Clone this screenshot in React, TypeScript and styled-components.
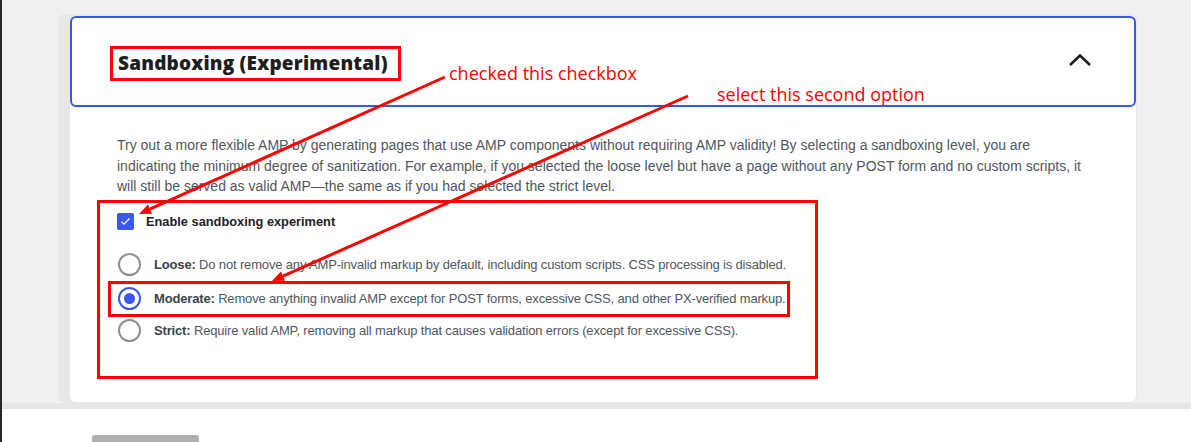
import React from "react";
import styled, { createGlobalStyle } from "styled-components";

const GlobalStyle = createGlobalStyle`
  html, body { margin: 0; padding: 0; background: #ffffff; }
  body { font-family: "Liberation Sans", Arial, sans-serif; }
  * { box-sizing: border-box; }
`;

const Page = styled.div`
  position: relative;
  display: flex;
  width: 1191px;
  height: 442px;
  overflow: hidden;
`;

const DarkEdge = styled.div`
  width: 2px;
  flex: none;
  background: #23282d;
`;

const Main = styled.div`
  flex: 1;
  display: flex;
  flex-direction: column;
`;

const TopSection = styled.div`
  background: #f0f0f0;
  padding: 14px 54px 0 56px;
  border-bottom: 6px solid #e7e7e7;
`;

const Wrapper = styled.div`
  background: #e7e7e7;
  border-radius: 8px;
  padding: 2px 1px 1px 12px;
`;

const Card = styled.section`
  background: #ffffff;
  border-radius: 6px;
`;

const Header = styled.div`
  height: 91px;
  border: 2px solid #3858e9;
  border-radius: 6px;
  display: flex;
  align-items: center;
  justify-content: space-between;
  padding: 4px 42px 0 38px;
`;

const Highlight = styled.div`
  border: 3px solid #ff0000;
`;

const Title = styled.h2`
  margin: 0;
  padding: 2px 10px 3px 5px;
  font-family: "Open Sans", "Noto Sans", sans-serif;
  font-weight: 800;
  font-size: 19px;
  line-height: 24px;
  color: #1e1e1e;
  letter-spacing: 0.2px;
`;

const Chevron = styled.svg`
  width: 24px;
  height: 14px;
  margin-top: -8px;
  display: block;
`;

const Body = styled.div`
  padding: 28px 40px 23px 47px;
`;

const Description = styled.p`
  margin: 0;
  font-size: 14px;
  line-height: 20.5px;
  color: #50575e;
  white-space: nowrap;
`;

const OptionsBox = styled.div`
  margin: 3px 0 0 -20px;
  width: 721px;
  height: 179px;
  border: 3px solid #ff0000;
  padding: 10px 0 0 17px;
`;

const CheckRow = styled.label`
  display: flex;
  align-items: center;
  gap: 12px;
  height: 18px;
  font-size: 12.8px;
  font-weight: 700;
  color: #1d2327;
`;

const CheckBox = styled.span`
  width: 17px;
  height: 17px;
  border-radius: 2px;
  background: #3858e9;
  display: flex;
  align-items: center;
  justify-content: center;
`;

const RadioList = styled.div`
  margin: 17px 0 0 -17px;
  display: flex;
  flex-direction: column;
`;

const RadioRow = styled.label<{ $marked?: boolean; $h: number }>`
  display: flex;
  align-items: center;
  gap: 13px;
  height: ${(p) => p.$h}px;
  margin-left: 8px;
  width: 682px;
  padding-left: ${(p) => (p.$marked ? 7 : 10)}px;
  border: ${(p) => (p.$marked ? "3px solid #ff0000" : "none")};
  font-size: 13px;
  letter-spacing: -0.16px;
  color: #50575e;
  white-space: nowrap;
`;

const Radio = styled.span<{ $on?: boolean }>`
  width: 23px;
  height: 23px;
  flex: none;
  border-radius: 50%;
  border: 2px solid ${(p) => (p.$on ? "#3858e9" : "#8c8f94")};
  display: flex;
  align-items: center;
  justify-content: center;
  &::after {
    content: "";
    display: ${(p) => (p.$on ? "block" : "none")};
    width: 11px;
    height: 11px;
    border-radius: 50%;
    background: #3858e9;
  }
`;

const Strong = styled.b`
  font-weight: 700;
  color: #3c434a;
`;

const Footer = styled.div`
  flex: 1;
  background: #ffffff;
  padding: 26px 0 0 90px;
`;

const GrayButton = styled.div`
  width: 107px;
  height: 30px;
  border-radius: 3px;
  background: #b0b0b0;
`;

const Overlay = styled.svg`
  position: absolute;
  left: 0;
  top: 0;
  pointer-events: none;
`;

const Note = styled.span<{ $x: number; $y: number }>`
  position: absolute;
  left: ${(p) => p.$x}px;
  top: ${(p) => p.$y}px;
  font-family: "Open Sans", "Noto Sans", sans-serif;
  font-size: 18px;
  line-height: 22px;
  color: #ff0000;
  white-space: nowrap;
  pointer-events: none;
`;

export default function App() {
  return (
    <>
      <GlobalStyle />
      <Page>
        <DarkEdge />
        <Main>
          <TopSection>
            <Wrapper>
              <Card>
                <Header>
                  <Highlight>
                    <Title>Sandboxing (Experimental)</Title>
                  </Highlight>
                  <Chevron viewBox="0 0 24 14">
                    <polyline
                      points="2,12 12,2.5 22,12"
                      fill="none"
                      stroke="#1e1e1e"
                      strokeWidth="2.6"
                    />
                  </Chevron>
                </Header>
                <Body>
                  <Description>
                    Try out a more flexible AMP by generating pages that use AMP components without requiring AMP validity! By selecting a sandboxing level, you are
                    <br />
                    indicating the minimum degree of sanitization. For example, if you selected the loose level but have a page without any POST form and no custom scripts, it
                    <br />
                    will still be served as valid AMP—the same as if you had selected the strict level.
                  </Description>
                  <OptionsBox>
                    <CheckRow>
                      <CheckBox>
                        <svg width="11" height="9" viewBox="0 0 11 9">
                          <polyline
                            points="1.5,4.8 4,7.2 9.5,1.5"
                            fill="none"
                            stroke="#ffffff"
                            strokeWidth="1.3"
                          />
                        </svg>
                      </CheckBox>
                      Enable sandboxing experiment
                    </CheckRow>
                    <RadioList>
                      <RadioRow $h={33}>
                        <Radio />
                        <span>
                          <Strong>Loose:</Strong> Do not remove any AMP-invalid markup by default, including custom scripts. CSS processing is disabled.
                        </span>
                      </RadioRow>
                      <RadioRow $h={36} $marked>
                        <Radio $on />
                        <span>
                          <Strong>Moderate:</Strong> Remove anything invalid AMP except for POST forms, excessive CSS, and other PX-verified markup.
                        </span>
                      </RadioRow>
                      <RadioRow $h={28}>
                        <Radio />
                        <span>
                          <Strong>Strict:</Strong> Require valid AMP, removing all markup that causes validation errors (except for excessive CSS).
                        </span>
                      </RadioRow>
                    </RadioList>
                  </OptionsBox>
                </Body>
              </Card>
            </Wrapper>
          </TopSection>
          <Footer>
            <GrayButton />
          </Footer>
        </Main>
        <Overlay width="1191" height="442" viewBox="0 0 1191 442">
          <line x1="445" y1="77" x2="149.9" y2="209.1" stroke="#ff0000" strokeWidth="3" />
          <polygon points="139,214 152,213.7 147.9,204.5" fill="#ff0000" />
          <line x1="688" y1="96" x2="283" y2="276.1" stroke="#ff0000" strokeWidth="3" />
          <polygon points="272,281 285,280.7 280.9,271.6" fill="#ff0000" />
        </Overlay>
        <Note $x={449} $y={62}>checked this checkbox</Note>
        <Note $x={717} $y={83}>select this second option</Note>
      </Page>
    </>
  );
}
